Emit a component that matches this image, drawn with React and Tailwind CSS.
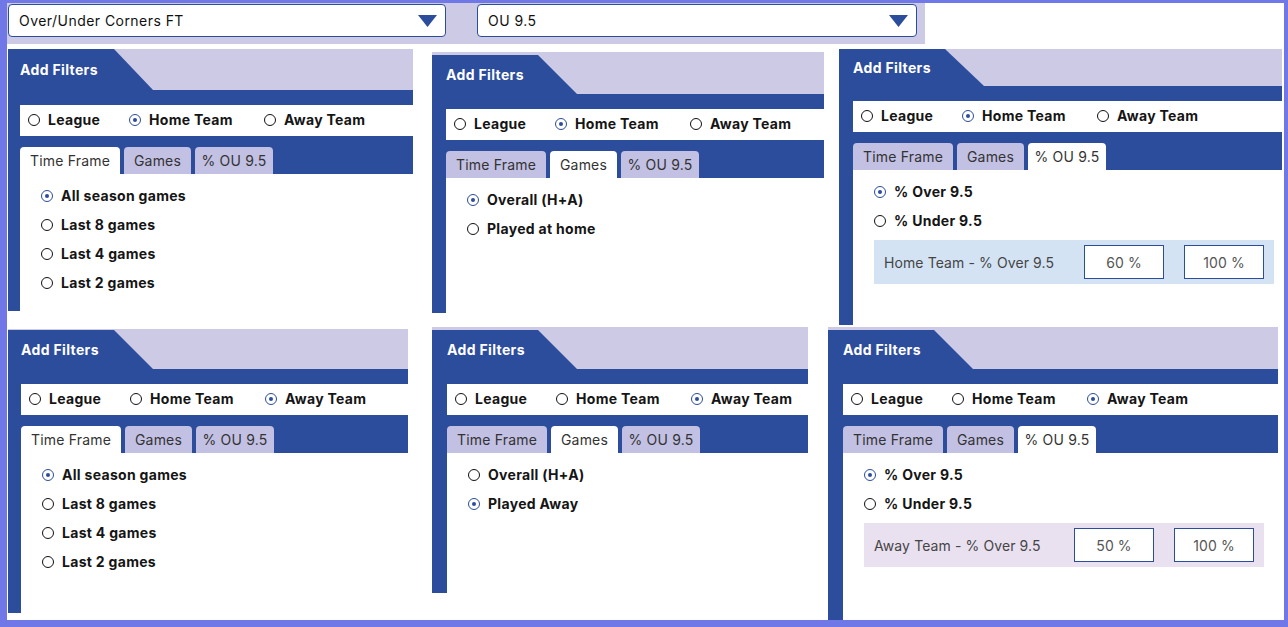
import React from "react";

const FONT = { fontFamily: "Inter, 'Open Sans', sans-serif" };

function Radio({ checked }) {
  return checked ? (
    <span className="w-[12px] h-[12px] shrink-0 rounded-full border-[1.5px] border-[#2c4c9c] flex items-center justify-center">
      <span className="w-[4px] h-[4px] rounded-full bg-[#2c4c9c]" />
    </span>
  ) : (
    <span className="w-[12px] h-[12px] shrink-0 rounded-full border-[1.5px] border-[#111]" />
  );
}

function Caret() {
  return (
    <svg width="19" height="12" viewBox="0 0 19 12" className="shrink-0">
      <polygon points="0,0 19,0 9.5,12" fill="#2c4c9c" />
    </svg>
  );
}

function Dropdown({ label, width }) {
  return (
    <div
      className="h-[33px] bg-white border-[1.5px] border-[#2c4c9c] rounded-[4px] flex items-center justify-between pl-[10px] pr-[8px] text-[14px] tracking-[0.45px] text-[#111]"
      style={{ width }}
    >
      <span>{label}</span>
      <Caret />
    </div>
  );
}

function Panel({ width, strip, headerH, blueOffset, contentH, scope, tab, kind, box }) {
  const scopes = ["League", "Home Team", "Away Team"];
  const scopeW = ["w-[101px]", "w-[135px]", ""];
  const tabs = [
    { t: "Time Frame", w: "w-[100px]" },
    { t: "Games", w: "w-[67px]" },
    { t: "% OU 9.5", w: "w-[78px]" },
  ];
  return (
    <div className="bg-[#2c4c9c] flex flex-col" style={{ width }}>
      <div className="bg-[#cdcae6] flex flex-col" style={{ height: headerH }}>
        <div style={{ height: blueOffset }} />
        <div
          className="flex-1 w-[145px] bg-[#2c4c9c] [clip-path:polygon(0_0,106px_0,145px_100%,0_100%)] flex items-center text-white font-bold text-[14px] tracking-[0.35px] pb-[1px]"
          style={{ paddingLeft: strip }}
        >
          Add Filters
        </div>
      </div>
      <div className="h-[15px]" />
      <div
        className="h-[31px] bg-white flex items-center pl-[8px] pb-[2px] text-[14px] font-bold tracking-[0.3px] text-[#151515]"
        style={{ marginLeft: strip }}
      >
        {scopes.map((s, i) => (
          <div key={s} className={`flex items-center gap-[8px] ${scopeW[i]}`}>
            <Radio checked={scope === i} />
            <span>{s}</span>
          </div>
        ))}
      </div>
      <div className="h-[11px]" />
      <div className="h-[27px] flex gap-[4px] items-end" style={{ marginLeft: strip }}>
        {tabs.map((t, i) => (
          <div
            key={t.t}
            className={`${t.w} h-[27px] rounded-t-[4px] flex items-center justify-center text-[14px] tracking-[0.2px] text-[#333] ${tab === i ? "bg-white" : "bg-[#c2c0e3]"}`}
          >
            {t.t}
          </div>
        ))}
      </div>
      <div className="bg-white pt-[7px] pl-[21px] flex flex-col" style={{ marginLeft: strip, height: contentH }}>
        {kind.map((k) => (
          <div key={k.t} className="h-[29px] flex items-center gap-[8px] text-[14px] font-bold tracking-[0.3px] text-[#151515]">
            <Radio checked={k.c} />
            <span>{k.t}</span>
          </div>
        ))}
        {box && (
          <div className={`mt-[5px] w-[400px] h-[44px] flex items-center pl-[10px] pr-[10px] text-[14px] tracking-[0.1px] text-[#454545] ${box.bg}`}>
            <span className="w-[200px]">{box.label}</span>
            <div className="w-[80px] h-[34px] bg-white border border-[#2c4c9c] flex items-center justify-center text-[#555]">{box.a}</div>
            <div className="w-[80px] h-[34px] ml-[20px] bg-white border border-[#2c4c9c] flex items-center justify-center text-[#555]">100 %</div>
          </div>
        )}
      </div>
    </div>
  );
}

const timeFrame = [
  { t: "All season games", c: true },
  { t: "Last 8 games", c: false },
  { t: "Last 4 games", c: false },
  { t: "Last 2 games", c: false },
];

export default function App() {
  return (
    <div
      className="w-[1288px] h-[627px] bg-white border-solid border-[#7077e6] border-t-[3px] border-l-[7px] border-r-[4px] border-b-[7px] overflow-hidden flex flex-col"
      style={FONT}
    >
      <div className="h-[41px] flex shrink-0">
        <div className="w-[918px] bg-[#cdcae6] flex items-start pt-[1px] pl-[1px] gap-[31px]">
          <Dropdown label="Over/Under Corners FT" width={438} />
          <Dropdown label="OU 9.5" width={440} />
        </div>
      </div>
      <div className="flex items-start">
        <div className="w-[425px] flex flex-col">
          <div className="ml-[1px] mt-[5px]">
            <Panel width={405} strip={12} headerH={41} blueOffset={0} contentH={137} scope={1} tab={0} kind={timeFrame} />
          </div>
          <div className="ml-[1px] mt-[18px]">
            <Panel width={400} strip={13} headerH={40} blueOffset={1} contentH={160} scope={2} tab={0} kind={timeFrame} />
          </div>
        </div>
        <div className="w-[396px] flex flex-col">
          <div className="mt-[8px]">
            <Panel
              width={392}
              strip={14}
              headerH={42}
              blueOffset={3}
              contentH={135}
              scope={1}
              tab={1}
              kind={[
                { t: "Overall (H+A)", c: true },
                { t: "Played at home", c: false },
              ]}
            />
          </div>
          <div className="mt-[14px]">
            <Panel
              width={376}
              strip={15}
              headerH={42}
              blueOffset={3}
              contentH={140}
              scope={2}
              tab={1}
              kind={[
                { t: "Overall (H+A)", c: false },
                { t: "Played Away", c: true },
              ]}
            />
          </div>
        </div>
        <div className="w-[456px] flex flex-col">
          <div className="ml-[11px] mt-[5px]">
            <Panel
              width={443}
              strip={14}
              headerH={37}
              blueOffset={0}
              contentH={155}
              scope={1}
              tab={2}
              kind={[
                { t: "% Over 9.5", c: true },
                { t: "% Under 9.5", c: false },
              ]}
              box={{ label: "Home Team - % Over 9.5", a: "60 %", bg: "bg-[#d4e3f4]" }}
            />
          </div>
          <div className="mt-[2px]">
            <Panel
              width={450}
              strip={15}
              headerH={42}
              blueOffset={3}
              contentH={167}
              scope={2}
              tab={2}
              kind={[
                { t: "% Over 9.5", c: true },
                { t: "% Under 9.5", c: false },
              ]}
              box={{ label: "Away Team - % Over 9.5", a: "50 %", bg: "bg-[#e9e0f0]" }}
            />
          </div>
        </div>
      </div>
    </div>
  );
}
